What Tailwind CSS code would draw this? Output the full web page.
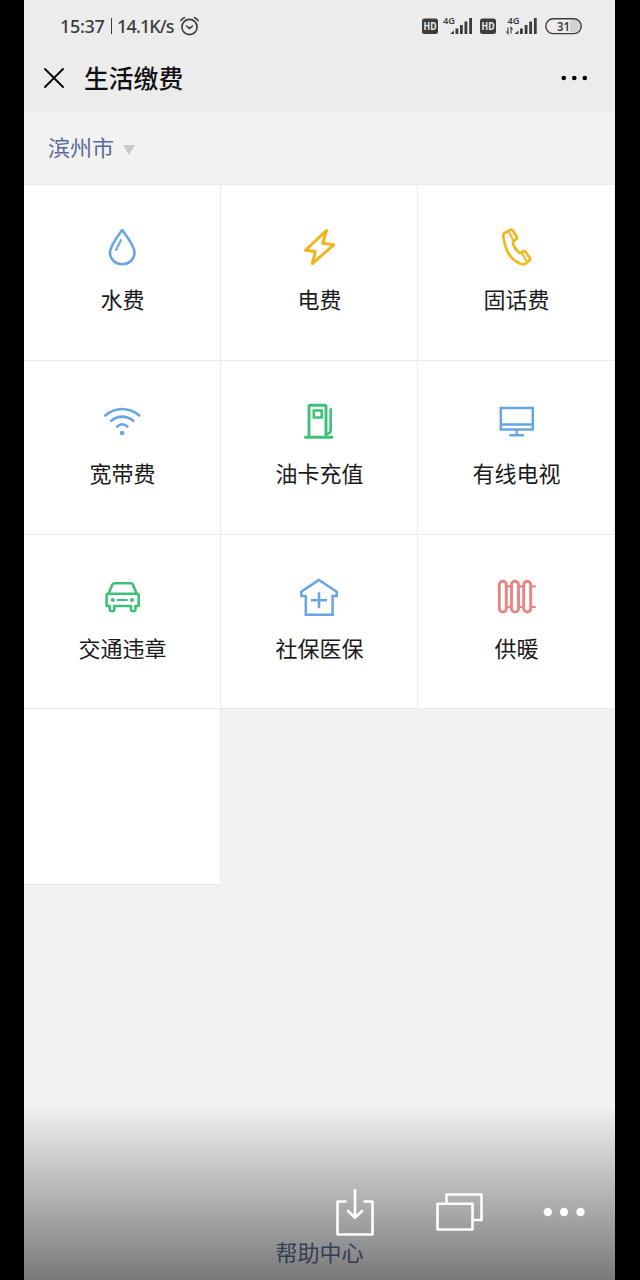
<!DOCTYPE html>
<html lang="zh-CN">
<head>
  <meta charset="UTF-8" />
  <meta name="viewport" content="width=device-width, initial-scale=1.0" />
  <title>生活缴费</title>
  <script src="https://cdn.jsdelivr.net/npm/@tailwindcss/browser@4"></script>
</head>

<body class="bg-black font-['Noto_Sans_CJK_SC',sans-serif]">
  <div class="relative ml-6 w-[591px] h-[1280px] bg-[#f2f2f2] overflow-hidden flex flex-col">

    <!-- Header -->
    <header class="h-28 shrink-0 bg-[#ececec]">
      <!-- Status bar -->
      <div class="h-[52px] pl-9 pr-[33px] flex items-center justify-between text-[#3c3c3c]">
        <div class="flex items-center gap-[5px]">
          <div class="w-[115px] flex items-center whitespace-nowrap font-['Noto_Sans',sans-serif] font-medium text-[18px] leading-none">
            <span class="tracking-[-0.3px]">15:37</span>
            <span class="ml-1.5 w-[1.5px] h-4 bg-[#3c3c3c]"></span>
            <span class="ml-[5px] tracking-[-0.9px]">14.1K/s</span>
          </div>
          <svg class="w-5 h-5" viewBox="0 0 20 20" fill="none" stroke="currentColor" stroke-width="1.6" stroke-linecap="round">
            <circle cx="9.5" cy="11" r="7.6" />
            <path d="M6.500 10l3 2.400 3-2.400M.8 4.600Q2 2.600 4.400 1.700M18.200 4.600Q17 2.600 14.600 1.700" />
          </svg>
        </div>
        <svg class="w-[160px] h-6" viewBox="0 -3 160 24" fill="currentColor" font-family="Noto Sans, sans-serif">
          <rect x="0" y="1.500" width="16" height="15.500" rx="2.500" />
          <text x="8" y="13" text-anchor="middle" font-size="10" font-weight="700" fill="#ececec" textLength="13" lengthAdjust="spacingAndGlyphs">HD</text>
          <text x="21" y="7" font-size="9" font-weight="600" textLength="12" lengthAdjust="spacingAndGlyphs">4G</text>
          <path d="M28 17l4-3.500V17zM33.500 11.500h2.800V17h-2.800zM38 8h2.800v9H38zM42.500 4.500h2.800V17h-2.800zM47.200 1H50v16h-2.800z" />
          <rect x="58" y="1.500" width="16" height="15.500" rx="2.500" />
          <text x="66" y="13" text-anchor="middle" font-size="10" font-weight="700" fill="#ececec" textLength="13" lengthAdjust="spacingAndGlyphs">HD</text>
          <text x="85.500" y="7" font-size="9" font-weight="600" textLength="12" lengthAdjust="spacingAndGlyphs">4G</text>
          <path d="M86 10.500v6l-1.700-2M89 16.500v-6l1.700 2" fill="none" stroke="currentColor" stroke-width="1.100" />
          <path d="M92.500 17l4-3.500V17zM98 11.500h2.800V17H98zM102.700 8h2.800v9h-2.800zM107.200 4.500h2.800V17h-2.800zM111.900 1h2.800v16h-2.800z" />
          <path d="M148 3h4a6 6 0 0 1 0 12h-4z" fill="#d2d2d2" />
          <rect x="123.800" y="1.800" width="35.400" height="14.800" rx="7.400" fill="none" stroke="currentColor" stroke-width="1.400" />
          <text x="141.500" y="13.700" text-anchor="middle" font-size="12.500" font-weight="600" textLength="13" lengthAdjust="spacingAndGlyphs">31</text>
        </svg>
      </div>
      <!-- Title bar -->
      <div class="h-[52px] pl-5 pr-[27px] flex items-center text-black">
        <svg class="w-5 h-5" viewBox="0 0 20 20" fill="none" stroke="currentColor" stroke-width="1.800" stroke-linecap="round">
          <path d="M1 1l18 18M19 1L1 19" />
        </svg>
        <h1 class="ml-5 pb-0.5 text-[24.8px] leading-none font-medium text-[#111]">生活缴费</h1>
        <svg class="ml-auto w-[27px] h-2" viewBox="0 0 27 8" fill="currentColor">
          <circle cx="2.800" cy="4" r="2.300" />
          <circle cx="13.300" cy="4" r="2.300" />
          <circle cx="23.800" cy="4" r="2.300" />
        </svg>
      </div>
    </header>

    <!-- City -->
    <div class="h-[72px] shrink-0 pl-6 flex items-center gap-[9px] text-[#5b6b95]">
      <span class="pb-1 text-[22px] leading-none">滨州市</span>
      <svg class="w-3 h-2.5 mt-[3px]" viewBox="0 0 12 10" fill="#c8c8c8"><path d="M0 0h12L6 10z" /></svg>
    </div>

    <!-- Services -->
    <main class="grid grid-cols-3 grid-rows-[176px_174px_174px_176px] border-t border-[#ebebeb] text-[22px] leading-none text-[#1a1a1a]">
      <a class="bg-white border-r border-b border-[#ebebeb] pt-[42px] flex flex-col items-center gap-5">
        <svg class="w-10 h-10" viewBox="0 0 40 40" fill="none" stroke="#67a6e6" stroke-width="2.600" stroke-linecap="round" stroke-linejoin="round">
          <path d="M20.200 3C16 9 8 18.500 8 25.500C8 32.500 13.500 37.200 20.200 37.200S32.500 32.500 32.500 25.500C32.500 18.500 24.500 9 20.200 3z" />
          <path d="M19 13l-5 10" stroke-width="2" />
        </svg>
        <span class="pl-px">水费</span>
      </a>
      <a class="bg-white border-r border-b border-[#ebebeb] pt-[42px] flex flex-col items-center gap-5">
        <svg class="w-10 h-10" viewBox="0 0 40 40" fill="none" stroke="#f2b41d" stroke-width="3" stroke-linejoin="round">
          <path d="M27.500 3.500L6.300 23.300L16.300 24.500L13.300 36.700L34.700 17.800L23.700 16.300z" />
        </svg>
        <span class="pl-px">电费</span>
      </a>
      <a class="bg-white border-r border-b border-[#ebebeb] pt-[42px] flex flex-col items-center gap-5">
        <svg class="w-10 h-10" viewBox="0 0 40 40" fill="none" stroke="#f0b721" stroke-width="2.700" stroke-linecap="round" stroke-linejoin="round">
          <path d="M8 6.500L14 3Q15.500 2.300 16.700 3.500L20.700 9.800Q21.200 11.500 20 12.300L17.400 14.300Q16.600 15.500 17.300 17.500Q19 22.300 23 25.300Q24.300 26.100 25.500 25.300L27.500 24.300Q28.800 23.800 29.600 24.900L33.900 31.300Q34.500 32.800 33.200 33.800L29.500 36.700Q26.500 38 23.500 36.300Q13.500 31.500 10 21Q7.500 13 7.300 8.500Q7.200 7.300 8 6.500z" />
          <path d="M12.600 4.500l4.700 9M25.700 26l5.300 8.800" stroke-width="2" />
        </svg>
        <span class="pl-px">固话费</span>
      </a>
      <a class="bg-white border-r border-b border-[#ebebeb] pt-[41px] flex flex-col items-center gap-[19px]">
        <svg class="w-10 h-10" viewBox="0 0 40 40" fill="none" stroke="#67a6e6" stroke-width="2.600" stroke-linecap="round">
          <path d="M3.300 13.500Q11 7 20.200 7T37.300 13.500M9.300 18.800Q14 14.600 20.200 14.600T31.300 18.800M15.200 24.500Q17.500 22.300 20.200 22.300T25.400 24.500" />
          <circle cx="20.100" cy="31" r="2.300" fill="#67a6e6" stroke="none" />
        </svg>
        <span class="pl-px">宽带费</span>
      </a>
      <a class="bg-white border-r border-b border-[#ebebeb] pt-[41px] flex flex-col items-center gap-[19px]">
        <svg class="w-10 h-10" viewBox="0 0 40 40" fill="none" stroke="#3dc179" stroke-width="2.900">
          <path d="M10 35V4.500Q10 3.200 11.300 3.200H25.700Q27 3.200 27 4.500V35M5.300 35.200H34" />
          <path d="M14.800 8.500h8v7h-8z" stroke-width="2.600" />
          <path d="M31.700 6.300V28Q31.700 31.700 27.500 32" stroke-width="2.600" />
        </svg>
        <span class="pl-px">油卡充值</span>
      </a>
      <a class="bg-white border-r border-b border-[#ebebeb] pt-[41px] flex flex-col items-center gap-[19px]">
        <svg class="w-10 h-10" viewBox="0 0 40 40" fill="none" stroke="#67a6e6" stroke-width="2.500">
          <path d="M4.800 5.900h32v21.700h-32zM4.800 22.600h32M20.700 28v5M13.300 33.300h14.700" />
        </svg>
        <span class="pl-px">有线电视</span>
      </a>
      <a class="bg-white border-r border-b border-[#ebebeb] pt-[42px] flex flex-col items-center gap-[19px]">
        <svg class="w-10 h-10" viewBox="0 0 40 40" fill="none" stroke="#3dc179" stroke-width="2.600" stroke-linejoin="round">
          <path d="M6.500 16.800L10.300 7.800Q10.800 6.200 12.500 6.200H28.700Q30.400 6.200 31 7.800L34.700 16.800" />
          <path d="M6 16.800H35Q36.700 16.800 36.700 18.500V29H33.500V32.500Q33.500 34.200 31.200 34.200T29 32.500V29H12.300V32.500Q12.300 34.200 10 34.200T7.800 32.500V29H4.600V18.500Q4.600 16.800 6 16.800z" />
          <path d="M15 23h10.700" stroke-width="2" />
          <g fill="#3dc179" stroke="none"><circle cx="10.800" cy="23" r="2" /><circle cx="30" cy="23" r="2" /></g>
        </svg>
        <span class="pl-px">交通违章</span>
      </a>
      <a class="bg-white border-r border-b border-[#ebebeb] pt-[42px] flex flex-col items-center gap-[19px]">
        <svg class="w-10 h-10" viewBox="0 0 40 40" fill="none" stroke="#67a6e6" stroke-width="2.500">
          <path d="M20 2.900L2.300 14.700V18.900H6.800V37.700H33.600V18.900H37.700V14.700z" />
          <path d="M20 15.300v16M12 23.300h16" />
        </svg>
        <span class="pl-px">社保医保</span>
      </a>
      <a class="bg-white border-r border-b border-[#ebebeb] pt-[42px] flex flex-col items-center gap-[19px]">
        <svg class="w-10 h-10" viewBox="0 0 40 40" fill="none" stroke="#ec8383" stroke-width="2.900">
          <rect x="3.300" y="4.300" width="7" height="30.800" rx="3.500" />
          <rect x="15.500" y="4.300" width="7" height="30.800" rx="3.500" />
          <rect x="27.700" y="4.300" width="7" height="30.800" rx="3.500" />
          <path d="M10.300 9.400h5.200M22.500 9.400h5.200M34.700 9.400h5M10.300 30h5.200M22.500 30h5.200M34.700 30h5" stroke-width="2.200" />
        </svg>
        <span class="pl-px">供暖</span>
      </a>
      <a class="bg-white border-r border-b border-[#ebebeb]"></a>
    </main>

    <a class="mt-auto mb-[18px] text-center text-[22px] leading-none text-[#576b95]">帮助中心</a>

    <!-- Viewer toolbar laid over the page -->
    <div class="absolute inset-x-0 bottom-0 h-[176px] bg-linear-to-b from-black/0 to-black/50 pt-[84px] pl-[311px] flex items-start text-white">
      <svg class="w-10 h-12" viewBox="0 0 40 48" fill="none" stroke="currentColor" stroke-width="2.600" stroke-linecap="round" stroke-linejoin="round">
        <path d="M10.500 13.500H2.500V46.500H37.500V13.500H29.500M20 2V29.500M13 23l7 6.800 7-6.800" />
      </svg>
      <svg class="ml-[60px] mt-1 w-12 h-10" viewBox="0 0 48 40" fill="none" stroke="currentColor" stroke-width="2.600" stroke-linejoin="round">
        <path d="M2.500 11.800H37.500V37.500H2.500zM11.500 11V2.500H46.500V28H38" />
      </svg>
      <svg class="ml-[60px] mt-[19px] w-[42px] h-2.5" viewBox="0 0 42 10" fill="currentColor">
        <circle cx="4.800" cy="5" r="4.200" />
        <circle cx="21" cy="5" r="4.200" />
        <circle cx="37.500" cy="5" r="4.200" />
      </svg>
    </div>
  </div>
</body>
</html>
